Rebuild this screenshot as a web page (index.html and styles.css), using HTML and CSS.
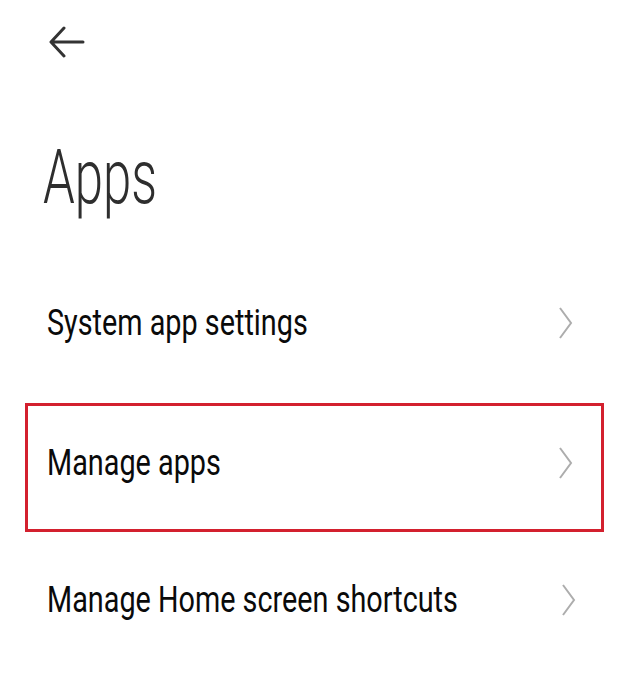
FILE: index.html
```html
<!DOCTYPE html>
<html lang="en">
<head>
    <meta charset="UTF-8">
    <meta name="viewport" content="width=device-width, initial-scale=1.0">
    <title>Apps</title>
    <link rel="stylesheet" href="styles.css">
</head>
<body>
    <div id="screen">
        <div class="topbar">
            <svg class="back" width="40" height="36" viewBox="0 0 40 36">
                <path d="M5 16 H36 M17 2 L4 16 L17 30" fill="none" stroke="#333" stroke-width="3" stroke-linecap="round" stroke-linejoin="round"/>
            </svg>
        </div>
        <h1 class="title">Apps</h1>
        <div class="list">
            <div class="row">
                <span class="label">System app settings</span>
                <svg class="chevron" width="16" height="34" viewBox="0 0 16 34"><path d="M2 2 L13 17 L2 32" fill="none" stroke="#adadad" stroke-width="2"/></svg>
            </div>
            <div class="row highlight">
                <span class="label">Manage apps</span>
                <svg class="chevron" width="16" height="34" viewBox="0 0 16 34"><path d="M2 2 L13 17 L2 32" fill="none" stroke="#adadad" stroke-width="2"/></svg>
            </div>
            <div class="row last">
                <span class="label">Manage Home screen shortcuts</span>
                <svg class="chevron" width="16" height="34" viewBox="0 0 16 34"><path d="M2 2 L13 17 L2 32" fill="none" stroke="#adadad" stroke-width="2"/></svg>
            </div>
        </div>
    </div>
</body>
</html>
```

FILE: styles.css
```css
body {
    margin: 0;
    background-color: #fff;
    font-family: Roboto, "Liberation Sans", sans-serif;
}
#screen {
    width: 619px;
    height: 691px;
    overflow: hidden;
}
.topbar {
    height: 86px;
    padding: 26px 0 0 47px;
    box-sizing: border-box;
}
.back {
    display: block;
}
.title {
    margin: 0;
    height: 167px;
    padding: 53px 0 0 64px;
    font-size: 76px;
    font-weight: 300;
    line-height: 1;
    color: #2e2e2e;
    transform: scaleX(0.67);
    transform-origin: left top;
    box-sizing: border-box;
}
.list {
    display: flex;
    flex-direction: column;
}
.row {
    display: flex;
    align-items: center;
    justify-content: space-between;
    margin-left: 25px;
    width: 579px;
    height: 139px;
    box-sizing: border-box;
    padding: 0 27px 0 19px;
    border: 3px solid transparent;
}
.label {
    flex: 1;
    font-size: 36px;
    color: #0a0a0a;
    transform: scaleX(0.8);
    transform-origin: left center;
    white-space: nowrap;
}
.chevron {
    flex-shrink: 0;
}
.highlight {
    margin-top: 11px;
    height: 129px;
    padding-bottom: 10px;
    border-color: #d3202e;
}
.last {
    height: 136px;
}
```
